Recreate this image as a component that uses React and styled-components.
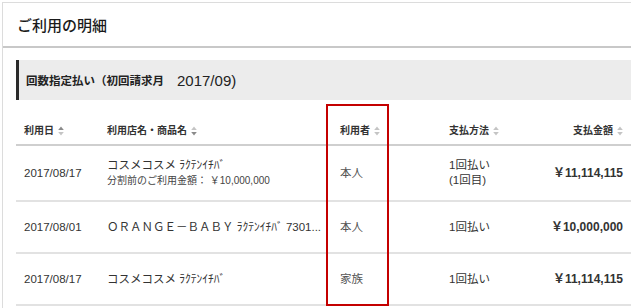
import React from 'react'
import styled, { createGlobalStyle } from 'styled-components'

const GlobalStyle = createGlobalStyle`
  body {
    margin: 0;
    padding: 2px 0 0 2px;
    background: #fff;
    font-family: "Liberation Sans", "Noto Sans CJK JP", sans-serif;
    color: #333;
  }
`

const COLS = '83px 227px 63px 122px 1fr'

const Card = styled.div`
  border-top: 1px solid #dcdcdc;
  border-left: 1px solid #dcdcdc;
  height: 320px;
  overflow: hidden;
`

const TitleBar = styled.div`
  height: 43px;
  display: flex;
  align-items: center;
  padding-left: 14px;
  border-bottom: 2px solid #c8c8c8;
  font-size: 15px;
  font-weight: 500;
  color: #1a1a1a;
`

const Section = styled.div`
  padding: 12px 0 0 13px;
`

const PlanBar = styled.div`
  height: 40px;
  display: flex;
  align-items: center;
  gap: 13px;
  background: #ececec;
  border-left: 3px solid #2b2b2b;
  padding-left: 7px;
  font-size: 11.5px;
  font-weight: bold;
  color: #222;

  span {
    font-size: 15px;
    font-weight: normal;
    font-family: "Liberation Sans", sans-serif;
  }
`

const Table = styled.div`
  position: relative;
`

const HeadRow = styled.div`
  display: grid;
  grid-template-columns: ${COLS};
  height: 46px;
  padding-top: 18px;
  box-sizing: border-box;
  border-bottom: 2px solid #cfcfcf;
  font-size: 10px;
  font-weight: bold;
  color: #333;
  line-height: 16px;
`

const HeadCell = styled.div`
  display: flex;
  align-items: center;
  gap: 4px;
  padding-left: ${p => p.$pl || 8}px;
  justify-content: ${p => (p.$right ? 'flex-end' : 'flex-start')};
  padding-right: ${p => (p.$right ? 8 : 0)}px;
`

const Row = styled.div`
  display: grid;
  grid-template-columns: ${COLS};
  align-items: center;
  min-height: ${p => p.$h}px;
  border-bottom: 2px solid #e2e2e2;
  font-size: 11.5px;
  color: #333;
`

const Cell = styled.div`
  padding-left: ${p => p.$pl || 8}px;
  padding-right: ${p => (p.$right ? 8 : 0)}px;
  min-width: 0;
  color: ${p => p.$muted ? '#555' : '#333'};
  text-align: ${p => (p.$right ? 'right' : 'left')};
  font-weight: ${p => (p.$bold ? 'bold' : 'normal')};
  font-size: ${p => (p.$bold ? '12px' : 'inherit')};
  line-height: 15px;
`

const Store = styled.div`
  font-size: 11.5px;
  white-space: nowrap;
`

const Note = styled.div`
  font-size: 10px;
  color: #444;
`

const Marker = styled.div`
  position: absolute;
  left: 310px;
  top: 4px;
  width: 63px;
  height: 202px;
  box-sizing: border-box;
  border: 2px solid #c40000;
  pointer-events: none;
`

const SortIcon = ({ active }) => (
  <svg width="6" height="10" viewBox="0 0 6 10">
    <path d="M3 0.5 L5.8 4 H0.2 Z" fill={active === 'up' ? '#8a8a8a' : '#c4c4c4'} />
    <path d="M3 9.5 L5.8 6 H0.2 Z" fill={active === 'down' ? '#8a8a8a' : '#c4c4c4'} />
  </svg>
)

const rows = [
  { date: '2017/08/17', store: 'コスメコスメ ﾗｸﾃﾝｲﾁﾊﾞ', note: '分割前のご利用金額： ￥10,000,000', user: '本人', pay: ['1回払い', '(1回目)'], amount: '￥11,114,115', h: 54 },
  { date: '2017/08/01', store: 'ＯＲＡＮＧＥ－ＢＡＢＹ ﾗｸﾃﾝｲﾁﾊﾞ 7301...', user: '本人', pay: ['1回払い'], amount: '￥10,000,000', h: 50 },
  { date: '2017/08/17', store: 'コスメコスメ ﾗｸﾃﾝｲﾁﾊﾞ', user: '家族', pay: ['1回払い'], amount: '￥11,114,115', h: 50 },
]

export default function App() {
  return (
    <>
      <GlobalStyle />
      <Card>
        <TitleBar>ご利用の明細</TitleBar>
        <Section>
          <PlanBar>回数指定払い（初回請求月<span>2017/09)</span></PlanBar>
          <Table>
            <HeadRow>
              <HeadCell>利用日<SortIcon active="up" /></HeadCell>
              <HeadCell>利用店名・商品名<SortIcon active="down" /></HeadCell>
              <HeadCell $pl={14}>利用者<SortIcon /></HeadCell>
              <HeadCell $pl={60}>支払方法<SortIcon /></HeadCell>
              <HeadCell $right>支払金額<SortIcon /></HeadCell>
            </HeadRow>
            {rows.map((r, i) => (
              <Row key={i} $h={r.h}>
                <Cell>{r.date}</Cell>
                <Cell>
                  <Store>{r.store}</Store>
                  {r.note && <Note>{r.note}</Note>}
                </Cell>
                <Cell $pl={14} $muted>{r.user}</Cell>
                <Cell $pl={60}>
                  {r.pay.map(p => <div key={p}>{p}</div>)}
                </Cell>
                <Cell $right $bold>{r.amount}</Cell>
              </Row>
            ))}
            <Marker />
          </Table>
        </Section>
      </Card>
    </>
  )
}
